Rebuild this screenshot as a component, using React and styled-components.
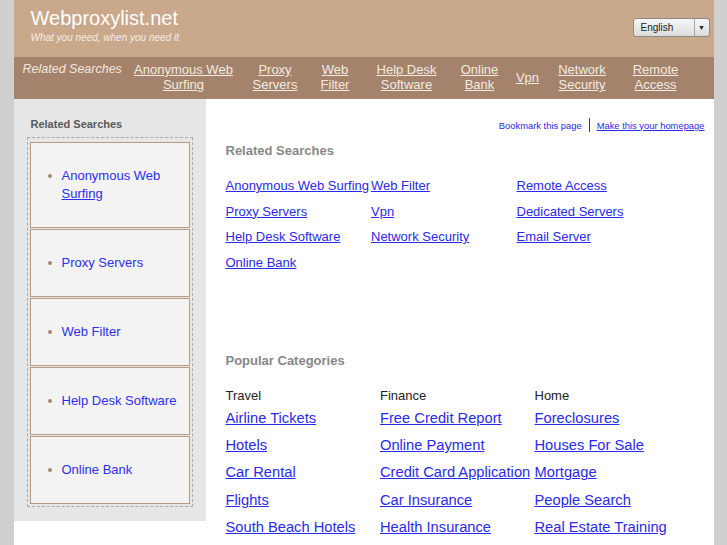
import React from "react";
import styled, { createGlobalStyle } from "styled-components";

const GlobalStyle = createGlobalStyle`
  body {
    margin: 0;
    background: #cfcfcf;
    font-family: "Liberation Sans", Arial, sans-serif;
  }
`;

const Page = styled.div`
  width: 700px;
  margin: 0 auto;
  background: #fff;
  min-height: 545px;
`;

const Header = styled.header`
  height: 57px;
  background: #c9a88b;
  display: flex;
  justify-content: space-between;
  align-items: flex-start;
  padding: 0 4px 0 17px;
  box-sizing: border-box;
`;

const Brand = styled.div`
  padding-top: 6px;
`;

const Title = styled.div`
  color: #fff;
  font-size: 20px;
  line-height: 24px;
`;

const Tagline = styled.div`
  color: #f6ece2;
  font-size: 10px;
  font-style: italic;
  margin-top: 2px;
`;

const Select = styled.div`
  margin-top: 18px;
  width: 75px;
  height: 17px;
  border: 1px solid #8e8a86;
  border-radius: 3px;
  background: linear-gradient(#f7f7f7, #dcdcdc);
  display: flex;
  font-size: 10px;
  color: #222;
`;

const SelectText = styled.span`
  flex: 1;
  padding-left: 7px;
  line-height: 17px;
`;

const SelectArrow = styled.span`
  width: 14px;
  border-left: 1px solid #a8a8a8;
  display: flex;
  align-items: center;
  justify-content: center;
  font-size: 7px;
`;

const Nav = styled.nav`
  height: 42px;
  background: #a4826b;
  display: flex;
  align-items: center;
  padding-left: 9px;
`;

const NavLabel = styled.span`
  width: 102px;
  color: #f1e8df;
  font-style: italic;
  font-size: 12.5px;
  white-space: nowrap;
  align-self: flex-start;
  margin-top: 5px;
`;

const NavItem = styled.a`
  width: ${(p) => p.w}px;
  text-align: center;
  color: #f3ebe3;
  font-size: 13px;
  line-height: 15px;
  text-decoration: underline;
  margin-top: -2px;
`;

const Body = styled.div`
  display: flex;
  align-items: flex-start;
`;

const Sidebar = styled.aside`
  width: 192px;
  background: #e6e6e6;
  padding: 19px 13px 14px;
  box-sizing: border-box;
`;

const SideHeading = styled.div`
  font-size: 11px;
  font-weight: bold;
  color: #5a5a5a;
  padding-left: 4px;
  margin-bottom: 7px;
`;

const SideBox = styled.ul`
  list-style: none;
  margin: 0;
  padding: 4px 2px 2px;
  border: 1px dashed #a9a9a9;
  display: flex;
  flex-direction: column;
  gap: 1px;
`;

const SideItem = styled.li`
  border: 1px solid #b59a85;
  background: #f3f3f3;
  padding: 24px 10px 24px 17px;
  display: flex;
  gap: 10px;
  font-size: 13px;
  line-height: 18px;
  &::before {
    content: "";
    width: 4px;
    height: 4px;
    border-radius: 50%;
    background: #a68772;
    margin-top: 7px;
    flex-shrink: 0;
  }
`;

const SideLink = styled.a`
  color: #2e2ef0;
  text-decoration: none;
`;

const Under = styled.span`
  text-decoration: underline;
`;

const Main = styled.main`
  flex: 1;
  padding: 19px 9px 0 20px;
`;

const Bookmarks = styled.div`
  display: flex;
  justify-content: flex-end;
  align-items: center;
  font-size: 9.4px;
  gap: 7px;
`;

const BookLink = styled.a`
  color: #2a2aee;
  text-decoration: ${(p) => (p.u ? "underline" : "none")};
`;

const Divider = styled.span`
  width: 1px;
  height: 14px;
  background: #2a2aee;
`;

const Heading = styled.h2`
  margin: ${(p) => p.mt}px 0 ${(p) => p.mb}px;
  font-size: 13px;
  font-weight: bold;
  color: #888;
`;

const LinkGrid = styled.div`
  display: grid;
  grid-template-columns: repeat(3, ${(p) => p.col}px);
  row-gap: ${(p) => p.rg}px;
`;

const GridLink = styled.a`
  color: #2a2aee;
  font-size: ${(p) => p.size}px;
  line-height: 18px;
  text-decoration: underline;
  white-space: nowrap;
`;

const CatHead = styled.div`
  font-size: 13px;
  color: #222;
  line-height: 16px;
  margin-bottom: -4px;
`;

const Column = styled.div`
  display: flex;
  flex-direction: column;
  gap: 9.3px;
`;

const navItems = [
  { w: 118, t: ["Anonymous Web", "Surfing"] },
  { w: 65, t: ["Proxy", "Servers"] },
  { w: 55, t: ["Web", "Filter"] },
  { w: 88, t: ["Help Desk", "Software"] },
  { w: 58, t: ["Online", "Bank"] },
  { w: 38, t: ["Vpn"] },
  { w: 71, t: ["Network", "Security"] },
  { w: 76, t: ["Remote", "Access"] },
];

const related = [
  "Anonymous Web Surfing", "Web Filter", "Remote Access",
  "Proxy Servers", "Vpn", "Dedicated Servers",
  "Help Desk Software", "Network Security", "Email Server",
  "Online Bank",
];

const categories = [
  { name: "Travel", links: ["Airline Tickets", "Hotels", "Car Rental", "Flights", "South Beach Hotels"] },
  { name: "Finance", links: ["Free Credit Report", "Online Payment", "Credit Card Application", "Car Insurance", "Health Insurance"] },
  { name: "Home", links: ["Foreclosures", "Houses For Sale", "Mortgage", "People Search", "Real Estate Training"] },
];

export default function App() {
  return (
    <>
      <GlobalStyle />
      <Page>
        <Header>
          <Brand>
            <Title>Webproxylist.net</Title>
            <Tagline>What you need, when you need it</Tagline>
          </Brand>
          <Select>
            <SelectText>English</SelectText>
            <SelectArrow>▼</SelectArrow>
          </Select>
        </Header>
        <Nav>
          <NavLabel>Related Searches</NavLabel>
          {navItems.map((n) => (
            <NavItem key={n.t[0]} w={n.w} href="#">
              {n.t.map((line, i) => (
                <React.Fragment key={line}>
                  {i > 0 && <br />}
                  {line}
                </React.Fragment>
              ))}
            </NavItem>
          ))}
        </Nav>
        <Body>
          <Sidebar>
            <SideHeading>Related Searches</SideHeading>
            <SideBox>
              <SideItem>
                <SideLink href="#">
                  Anonymous Web <Under>Surfing</Under>
                </SideLink>
              </SideItem>
              <SideItem>
                <SideLink href="#">Proxy Servers</SideLink>
              </SideItem>
              <SideItem>
                <SideLink href="#">Web Filter</SideLink>
              </SideItem>
              <SideItem>
                <SideLink href="#">Help Desk Software</SideLink>
              </SideItem>
              <SideItem>
                <SideLink href="#">Online Bank</SideLink>
              </SideItem>
            </SideBox>
          </Sidebar>
          <Main>
            <Bookmarks>
              <BookLink href="#">Bookmark this page</BookLink>
              <Divider />
              <BookLink u href="#">Make this your homepage</BookLink>
            </Bookmarks>
            <Heading mt={11} mb={19}>Related Searches</Heading>
            <LinkGrid col={145.5} rg={7.5}>
              {related.map((r) => (
                <GridLink key={r} size={13} href="#">{r}</GridLink>
              ))}
            </LinkGrid>
            <Heading as="h3" mt={81} mb={20}>Popular Categories</Heading>
            <LinkGrid col={154.5} rg={0}>
              {categories.map((c) => (
                <Column key={c.name}>
                  <CatHead>{c.name}</CatHead>
                  {c.links.map((l) => (
                    <GridLink key={l} size={14.7} href="#">{l}</GridLink>
                  ))}
                </Column>
              ))}
            </LinkGrid>
          </Main>
        </Body>
      </Page>
    </>
  );
}
